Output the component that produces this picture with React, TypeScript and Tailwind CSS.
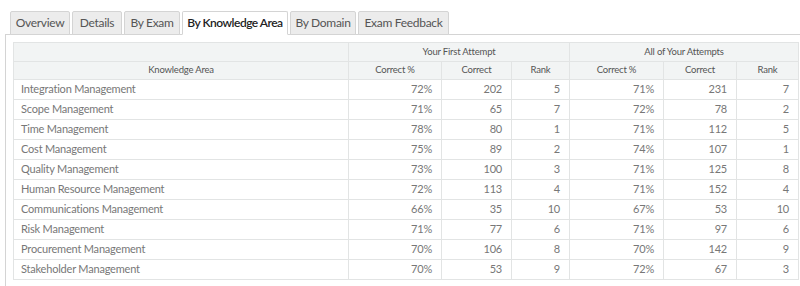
import React from "react";

const tabs: [string, string][] = [
  ["Overview", "w-[60px]"],
  ["Details", "w-[50px]"],
  ["By Exam", "w-[56px]"],
  ["By Knowledge Area", "w-[106px]"],
  ["By Domain", "w-[66px]"],
  ["Exam Feedback", "w-[91px]"],
];

const rows: [string, string, number, number, string, number, number][] = [
  ["Integration Management", "72%", 202, 5, "71%", 231, 7],
  ["Scope Management", "71%", 65, 7, "72%", 78, 2],
  ["Time Management", "78%", 80, 1, "71%", 112, 5],
  ["Cost Management", "75%", 89, 2, "74%", 107, 1],
  ["Quality Management", "73%", 100, 3, "71%", 125, 8],
  ["Human Resource Management", "72%", 113, 4, "71%", 152, 4],
  ["Communications Management", "66%", 35, 10, "67%", 53, 10],
  ["Risk Management", "71%", 77, 6, "71%", 97, 6],
  ["Procurement Management", "70%", 106, 8, "70%", 142, 9],
  ["Stakeholder Management", "70%", 53, 9, "72%", 67, 3],
];

const th = "border border-[#e2e4e4] font-normal";
const td = "border border-[#e2e4e4] pr-[9px] text-right";

export default function App() {
  return (
    <div className="w-[800px] h-[286px] bg-white overflow-hidden pt-[11px]" style={{ fontFamily: "Lato, 'Open Sans', sans-serif" }}>
      <div className="flex pl-[10px] gap-[2px] h-[24px] relative z-10">
        {tabs.map(([t, w], i) => {
          const active = i === 3;
          return (
            <div
              key={t}
              className={
                w +
                " h-[24px] flex items-center justify-center text-[12px] border border-[#d4d4d4] rounded-t-[2px] " +
                (active
                  ? "bg-white text-[#222] border-b-white font-semibold tracking-[-0.5px]"
                  : "bg-[#ececec] text-[#555] tracking-[-0.3px]")
              }
            >
              {t}
            </div>
          );
        })}
      </div>
      <div className="ml-[5px] -mt-px border-l border-t border-[#d4d4d4] h-[260px] pl-[7px] pt-[7px] pr-[2px]">
        <table className="w-[785px] border-collapse text-[11px] tracking-[-0.2px] table-fixed">
          <colgroup>
            <col className="w-[335px]" />
            <col className="w-[93px]" />
            <col className="w-[70px]" />
            <col className="w-[58px]" />
            <col className="w-[94px]" />
            <col className="w-[73px]" />
            <col className="w-[62px]" />
          </colgroup>
          <thead>
            <tr className="h-[19px] bg-[#f2f4f4] text-[#555] text-[9.5px]">
              <th className={th}></th>
              <th colSpan={3} className={th}>Your First Attempt</th>
              <th colSpan={3} className={th}>All of Your Attempts</th>
            </tr>
            <tr className="h-[18px] bg-[#f2f4f4] text-[#555] text-[9.5px]">
              <th className={th}>Knowledge Area</th>
              <th className={th}>Correct %</th>
              <th className={th}>Correct</th>
              <th className={th}>Rank</th>
              <th className={th}>Correct %</th>
              <th className={th}>Correct</th>
              <th className={th}>Rank</th>
            </tr>
          </thead>
          <tbody className="text-[#777]">
            {rows.map((r) => (
              <tr key={r[0]} className="h-[20px]">
                <td className="border border-[#e2e4e4] pl-[7px] text-left">{r[0]}</td>
                <td className={td}>{r[1]}</td>
                <td className={td}>{r[2]}</td>
                <td className={td}>{r[3]}</td>
                <td className={td}>{r[4]}</td>
                <td className={td}>{r[5]}</td>
                <td className={td}>{r[6]}</td>
              </tr>
            ))}
          </tbody>
        </table>
      </div>
    </div>
  );
}
